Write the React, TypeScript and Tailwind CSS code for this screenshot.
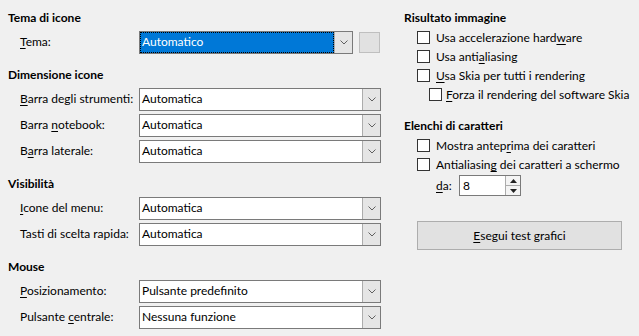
import React from 'react';

const FONT = { fontFamily: '"Segoe UI", Lato, "Noto Sans", sans-serif' };

// testo con lettera di scelta rapida sottolineata
function Mn({ text, at }: { text: string; at: number }) {
  if (at < 0) return <>{text}</>;
  return (
    <>
      {text.slice(0, at)}
      <span className="underline underline-offset-2">{text[at]}</span>
      {text.slice(at + 1)}
    </>
  );
}

function Chevron() {
  return (
    <svg width="8" height="5" viewBox="0 0 8 5">
      <polyline points="0.5,0.5 4,4 7.5,0.5" fill="none" stroke="#606060" strokeWidth="1" />
    </svg>
  );
}

function Combo({ value, w = 'w-[242px]', selected = false }: { value: string; w?: string; selected?: boolean }) {
  return (
    <div className={`flex shrink-0 h-[23px] ${w} border border-[#7a7a7a] bg-white`}>
      {selected ? (
        <div className="flex-1 flex items-center bg-[#0078d7] text-white border border-dotted border-black pl-[1px]">
          {value}
        </div>
      ) : (
        <div className="flex-1 flex items-center pl-[2px]">{value}</div>
      )}
      <div className="w-[18px] flex items-center justify-center bg-[#e5e5e5] border-l border-[#acacac]">
        <Chevron />
      </div>
    </div>
  );
}

function Row({ label, at, children }: { label: string; at: number; children: React.ReactNode }) {
  return (
    <div className="flex items-center h-[23px] pt-[1px]">
      <div className="w-[131px] shrink-0 pl-[12px] whitespace-nowrap">
        <Mn text={label} at={at} />
      </div>
      {children}
    </div>
  );
}

function Section({ title, first = false, children }: { title: string; first?: boolean; children: React.ReactNode }) {
  return (
    <div className={first ? '' : 'mt-[13px]'}>
      <div className="h-[16px] leading-[16px] pt-[1px] font-bold whitespace-nowrap">{title}</div>
      <div className="mt-[5px] flex flex-col gap-[3px]">{children}</div>
    </div>
  );
}

function Check({ label, at, indent = false }: { label: string; at: number; indent?: boolean }) {
  return (
    <div className={`flex items-center h-[19px] whitespace-nowrap ${indent ? 'pl-[12px]' : ''}`}>
      <div className="w-[13px] h-[13px] shrink-0 border border-[#333333] bg-white" />
      <span className={`pt-[1px] ${indent ? 'ml-[4px]' : 'ml-[6px]'}`}>
        <Mn text={label} at={at} />
      </span>
    </div>
  );
}

export default function App() {
  return (
    <div className="w-[639px] h-[336px] bg-[#f0f0f0] text-black text-[12px] flex overflow-hidden" style={FONT}>
      {/* colonna sinistra */}
      <div className="w-[396px] shrink-0 pl-[8px] pt-[9px]">
        <Section title="Tema di icone" first>
          <Row label="Tema:" at={0}>
            <Combo value="Automatico" w="w-[214px]" selected />
            <div className="ml-[6px] w-[21px] h-[21px] bg-[#e1e1e1] border border-[#bfbfbf]" />
          </Row>
        </Section>

        <Section title="Dimensione icone">
          <Row label="Barra degli strumenti:" at={0}>
            <Combo value="Automatica" />
          </Row>
          <Row label="Barra notebook:" at={6}>
            <Combo value="Automatica" />
          </Row>
          <Row label="Barra laterale:" at={1}>
            <Combo value="Automatica" />
          </Row>
        </Section>

        <Section title="Visibilità">
          <Row label="Icone del menu:" at={0}>
            <Combo value="Automatica" />
          </Row>
          <Row label="Tasti di scelta rapida:" at={-1}>
            <Combo value="Automatica" />
          </Row>
        </Section>

        <Section title="Mouse">
          <Row label="Posizionamento:" at={0}>
            <Combo value="Pulsante predefinito" />
          </Row>
          <Row label="Pulsante centrale:" at={9}>
            <Combo value="Nessuna funzione" />
          </Row>
        </Section>
      </div>

      {/* colonna destra */}
      <div className="flex-1 pl-[8px] pt-[9px]">
        <div className="h-[16px] leading-[16px] pt-[1px] font-bold whitespace-nowrap">Risultato immagine</div>
        <div className="mt-[3px] pl-[13px]">
          <Check label="Usa accelerazione hardware" at={22} />
          <Check label="Usa antialiasing" at={8} />
          <Check label="Usa Skia per tutti i rendering" at={0} />
          <Check label="Forza il rendering del software Skia" at={0} indent />
        </div>

        <div className="mt-[13px] h-[16px] leading-[16px] pt-[1px] font-bold whitespace-nowrap">Elenchi di caratteri</div>
        <div className="mt-[3px] pl-[13px]">
          <Check label="Mostra anteprima dei caratteri" at={12} />
          <Check label="Antialiasing dei caratteri a schermo" at={11} />
          <div className="flex items-center h-[21px] pl-[19px] mt-[1px]">
            <span className="w-[23px] pt-[1px]"><Mn text="da:" at={0} /></span>
            <div className="flex w-[62px] h-[21px] border border-[#7a7a7a] bg-white">
              <div className="flex-1 flex items-center pl-[3px]">8</div>
              <div className="w-[15px] flex flex-col border-l border-[#acacac]">
                <div className="flex-1 flex items-center justify-center bg-[#f4f4f4] border-b border-[#acacac]">
                  <svg width="7" height="4" viewBox="0 0 7 4"><polygon points="0,4 3.5,0 7,4" fill="#222" /></svg>
                </div>
                <div className="flex-1 flex items-center justify-center bg-[#f4f4f4]">
                  <svg width="7" height="4" viewBox="0 0 7 4"><polygon points="0,0 3.5,4 7,0" fill="#222" /></svg>
                </div>
              </div>
            </div>
          </div>
        </div>

        <div className="mt-[25px] ml-[13px] w-[205px] h-[29px] flex items-center justify-center bg-[#e1e1e1] border border-[#adadad]">
          <Mn text="Esegui test grafici" at={0} />
        </div>
      </div>
    </div>
  );
}
